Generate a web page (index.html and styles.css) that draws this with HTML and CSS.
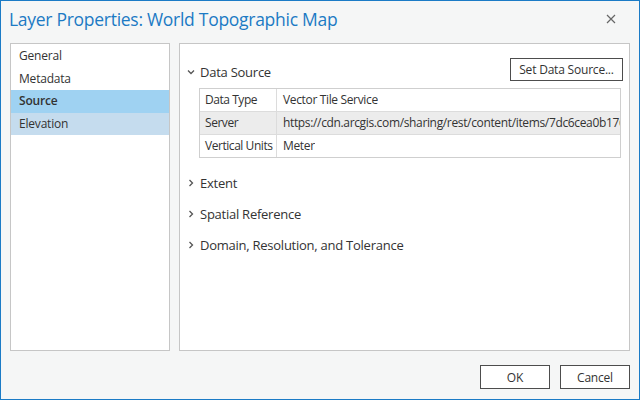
FILE: index.html
```html
<!DOCTYPE html>
<html>
<head>
<meta charset="utf-8">
<link rel="stylesheet" href="styles.css">
</head>
<body>
<div class="window">
  <div class="titlebar">
    <div class="title">Layer Properties: World Topographic Map</div>
    <div class="close">
      <svg width="10" height="10" viewBox="0 0 10 10"><path d="M1 1L9 9M9 1L1 9" stroke="#666" stroke-width="1.2" fill="none"/></svg>
    </div>
  </div>
  <div class="content">
    <div class="nav">
      <div class="nav-item">General</div>
      <div class="nav-item">Metadata</div>
      <div class="nav-item selected">Source</div>
      <div class="nav-item hover">Elevation</div>
    </div>
    <div class="main">
      <div class="section-head first">
        <div class="head-left">
          <svg class="chev" width="8" height="8" viewBox="0 0 8 8"><path d="M1 2.5L4 5.5L7 2.5" stroke="#555" stroke-width="1.3" fill="none"/></svg>
          <span class="head-text">Data Source</span>
        </div>
        <div class="btn set-btn">Set Data Source...</div>
      </div>
      <div class="table">
        <div class="row"><div class="c1">Data Type</div><div class="c2">Vector Tile Service</div></div>
        <div class="row alt"><div class="c1">Server</div><div class="c2">https://cdn.arcgis.com/sharing/rest/content/items/7dc6cea0b1764a1f9af8ffd3c7e3f1c3/resources/styles/root.json</div></div>
        <div class="row"><div class="c1">Vertical Units</div><div class="c2">Meter</div></div>
      </div>
      <div class="section-head collapsed ext">
        <svg class="chev" width="8" height="8" viewBox="0 0 8 8"><path d="M2.5 1L5.5 4L2.5 7" stroke="#555" stroke-width="1.3" fill="none"/></svg>
        <span class="head-text">Extent</span>
      </div>
      <div class="section-head collapsed">
        <svg class="chev" width="8" height="8" viewBox="0 0 8 8"><path d="M2.5 1L5.5 4L2.5 7" stroke="#555" stroke-width="1.3" fill="none"/></svg>
        <span class="head-text">Spatial Reference</span>
      </div>
      <div class="section-head collapsed">
        <svg class="chev" width="8" height="8" viewBox="0 0 8 8"><path d="M2.5 1L5.5 4L2.5 7" stroke="#555" stroke-width="1.3" fill="none"/></svg>
        <span class="head-text">Domain, Resolution, and Tolerance</span>
      </div>
    </div>
  </div>
  <div class="footer">
    <div class="btn foot-btn">OK</div>
    <div class="btn foot-btn">Cancel</div>
  </div>
</div>
</body>
</html>
```
FILE: styles.css
```css
html, body {
  margin: 0;
  padding: 0;
}
body {
  font-family: "Open Sans", "Noto Sans", sans-serif;
  color: #333;
}
.window {
  width: 640px;
  height: 400px;
  box-sizing: border-box;
  border: 1px solid #1b7bc6;
  background: #f5f6f6;
  display: flex;
  flex-direction: column;
}
.titlebar {
  height: 42px;
  display: flex;
  align-items: center;
  justify-content: space-between;
  padding: 0 23px 0 8px;
}
.title {
  font-size: 17.5px;
  color: #1c7ac4;
  letter-spacing: -0.28px;
  margin-top: -7px;
}
.close {
  display: flex;
  margin-top: -7px;
}
.content {
  display: flex;
  gap: 9px;
  padding: 0 9px;
  height: 308px;
}
.nav {
  width: 160px;
  box-sizing: border-box;
  border: 1px solid #c6c6c6;
  background: #fff;
  padding-top: 1px;
}
.nav-item {
  height: 22.5px;
  line-height: 22px;
  font-size: 12px;
  padding-left: 8px;
  color: #333;
  letter-spacing: -0.2px;
}
.nav-item.selected {
  background: #9fd2f2;
  font-weight: 600;
}
.nav-item.hover {
  background: #c5dcee;
}
.main {
  flex: 1;
  box-sizing: border-box;
  border: 1px solid #c6c6c6;
  background: #fff;
  padding: 13px 6px 0 6px;
}
.section-head {
  display: flex;
  align-items: center;
}
.section-head.first {
  justify-content: space-between;
  height: 24px;
}
.head-left {
  display: flex;
  align-items: center;
  margin-top: 6px;
}
.chev {
  margin-left: 1px;
  margin-right: 5px;
}
.head-text {
  font-size: 13px;
  color: #333;
  letter-spacing: -0.25px;
}
.btn {
  box-sizing: border-box;
  border: 1px solid #4d4d4d;
  background: #fff;
  font-size: 12px;
  color: #333;
  display: flex;
  align-items: center;
  justify-content: center;
  letter-spacing: -0.2px;
}
.set-btn {
  width: 113px;
  height: 23px;
}
.table {
  margin: 7px 0 0 13px;
  border: 1px solid #cfcfcf;
  width: 422px;
  box-sizing: border-box;
}
.row {
  display: flex;
  height: 22px;
  font-size: 12px;
  letter-spacing: -0.35px;
}
.row + .row {
  border-top: 1px solid #dcdcdc;
}
.row.alt {
  background: #ececec;
}
.c1 {
  width: 77px;
  box-sizing: border-box;
  flex: none;
  padding-left: 5px;
  border-right: 1px solid #dcdcdc;
  line-height: 21px;
  white-space: nowrap;
  letter-spacing: -0.45px;
}
.c2 {
  padding-left: 6px;
  line-height: 21px;
  white-space: nowrap;
  overflow: hidden;
}
.section-head.collapsed {
  height: 31px;
}
.section-head.ext {
  margin-top: 9px;
}
.footer {
  flex: 1;
  display: flex;
  justify-content: flex-end;
  align-items: flex-start;
  gap: 10px;
  padding: 14px 9px 0 0;
}
.foot-btn {
  width: 70px;
  height: 24px;
}
```
